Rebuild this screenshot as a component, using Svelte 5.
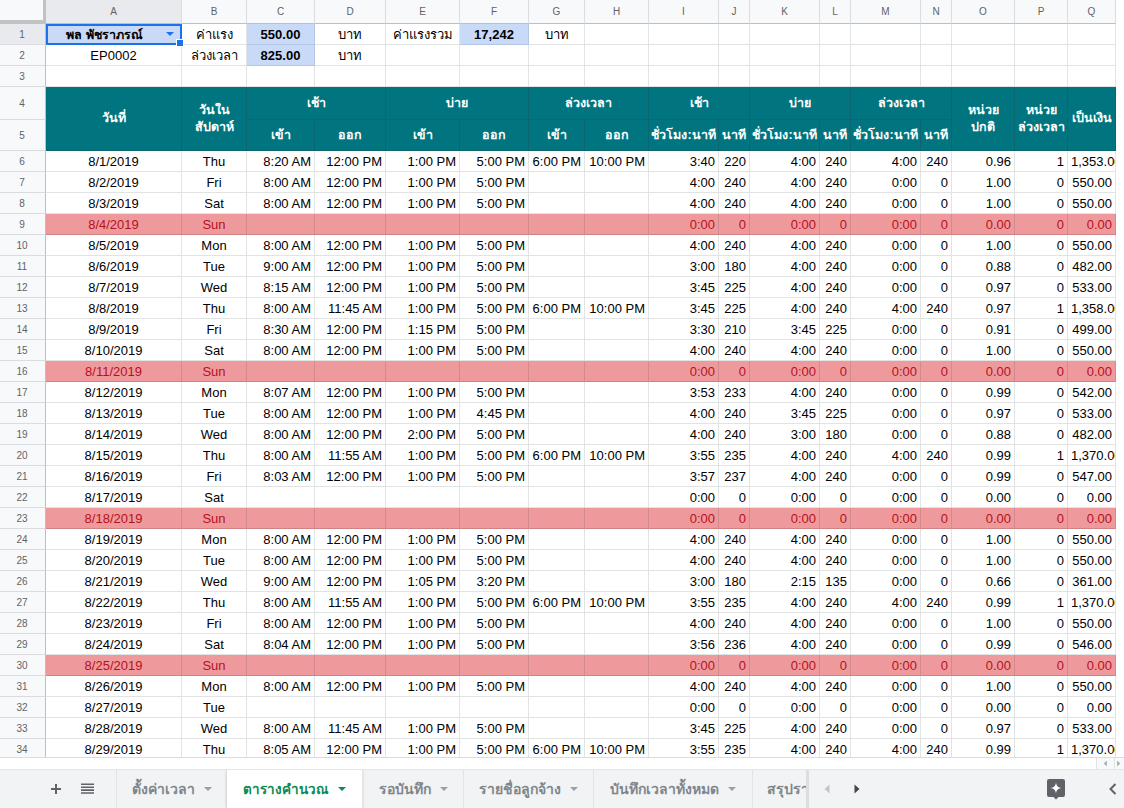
<script>
  const letters = "ABCDEFGHIJKLMNOPQ".split("");

  const std = ["8:00 AM", "12:00 PM", "1:00 PM", "5:00 PM", "", ""];
  const none = ["", "", "", "", "", ""];
  const full = ["4:00", "240", "4:00", "240", "0:00", "0", "1.00", "0", "550.00"];
  const zero = ["0:00", "0", "0:00", "0", "0:00", "0", "0.00", "0", "0.00"];

  function row(date, day, times, nums, off = false) {
    return { date, day, cells: [...times, ...nums], off };
  }

  const rows = [
    row("8/1/2019", "Thu", ["8:20 AM", "12:00 PM", "1:00 PM", "5:00 PM", "6:00 PM", "10:00 PM"], ["3:40", "220", "4:00", "240", "4:00", "240", "0.96", "1", "1,353.00"]),
    row("8/2/2019", "Fri", std, full),
    row("8/3/2019", "Sat", std, full),
    row("8/4/2019", "Sun", none, zero, true),
    row("8/5/2019", "Mon", std, full),
    row("8/6/2019", "Tue", ["9:00 AM", "12:00 PM", "1:00 PM", "5:00 PM", "", ""], ["3:00", "180", "4:00", "240", "0:00", "0", "0.88", "0", "482.00"]),
    row("8/7/2019", "Wed", ["8:15 AM", "12:00 PM", "1:00 PM", "5:00 PM", "", ""], ["3:45", "225", "4:00", "240", "0:00", "0", "0.97", "0", "533.00"]),
    row("8/8/2019", "Thu", ["8:00 AM", "11:45 AM", "1:00 PM", "5:00 PM", "6:00 PM", "10:00 PM"], ["3:45", "225", "4:00", "240", "4:00", "240", "0.97", "1", "1,358.00"]),
    row("8/9/2019", "Fri", ["8:30 AM", "12:00 PM", "1:15 PM", "5:00 PM", "", ""], ["3:30", "210", "3:45", "225", "0:00", "0", "0.91", "0", "499.00"]),
    row("8/10/2019", "Sat", std, full),
    row("8/11/2019", "Sun", none, zero, true),
    row("8/12/2019", "Mon", ["8:07 AM", "12:00 PM", "1:00 PM", "5:00 PM", "", ""], ["3:53", "233", "4:00", "240", "0:00", "0", "0.99", "0", "542.00"]),
    row("8/13/2019", "Tue", ["8:00 AM", "12:00 PM", "1:00 PM", "4:45 PM", "", ""], ["4:00", "240", "3:45", "225", "0:00", "0", "0.97", "0", "533.00"]),
    row("8/14/2019", "Wed", ["8:00 AM", "12:00 PM", "2:00 PM", "5:00 PM", "", ""], ["4:00", "240", "3:00", "180", "0:00", "0", "0.88", "0", "482.00"]),
    row("8/15/2019", "Thu", ["8:00 AM", "11:55 AM", "1:00 PM", "5:00 PM", "6:00 PM", "10:00 PM"], ["3:55", "235", "4:00", "240", "4:00", "240", "0.99", "1", "1,370.00"]),
    row("8/16/2019", "Fri", ["8:03 AM", "12:00 PM", "1:00 PM", "5:00 PM", "", ""], ["3:57", "237", "4:00", "240", "0:00", "0", "0.99", "0", "547.00"]),
    row("8/17/2019", "Sat", none, zero),
    row("8/18/2019", "Sun", none, zero, true),
    row("8/19/2019", "Mon", std, full),
    row("8/20/2019", "Tue", std, full),
    row("8/21/2019", "Wed", ["9:00 AM", "12:00 PM", "1:05 PM", "3:20 PM", "", ""], ["3:00", "180", "2:15", "135", "0:00", "0", "0.66", "0", "361.00"]),
    row("8/22/2019", "Thu", ["8:00 AM", "11:55 AM", "1:00 PM", "5:00 PM", "6:00 PM", "10:00 PM"], ["3:55", "235", "4:00", "240", "4:00", "240", "0.99", "1", "1,370.00"]),
    row("8/23/2019", "Fri", std, full),
    row("8/24/2019", "Sat", ["8:04 AM", "12:00 PM", "1:00 PM", "5:00 PM", "", ""], ["3:56", "236", "4:00", "240", "0:00", "0", "0.99", "0", "546.00"]),
    row("8/25/2019", "Sun", none, zero, true),
    row("8/26/2019", "Mon", std, full),
    row("8/27/2019", "Tue", none, zero),
    row("8/28/2019", "Wed", ["8:00 AM", "11:45 AM", "1:00 PM", "5:00 PM", "", ""], ["3:45", "225", "4:00", "240", "0:00", "0", "0.97", "0", "533.00"]),
    row("8/29/2019", "Thu", ["8:05 AM", "12:00 PM", "1:00 PM", "5:00 PM", "6:00 PM", "10:00 PM"], ["3:55", "235", "4:00", "240", "4:00", "240", "0.99", "1", "1,370.00"])
  ];

  // merged header cells: [first column, column span, sheet row, row span, text]
  const head = [
    [2, 1, 4, 2, "วันที่"],
    [3, 1, 4, 2, "วันใน\nสัปดาห์"],
    [4, 2, 4, 1, "เช้า"],
    [6, 2, 4, 1, "บ่าย"],
    [8, 2, 4, 1, "ล่วงเวลา"],
    [10, 2, 4, 1, "เช้า"],
    [12, 2, 4, 1, "บ่าย"],
    [14, 2, 4, 1, "ล่วงเวลา"],
    [16, 1, 4, 2, "หน่วย\nปกติ"],
    [17, 1, 4, 2, "หน่วย\nล่วงเวลา"],
    [18, 1, 4, 2, "เป็นเงิน"],
    [4, 1, 5, 1, "เข้า"],
    [5, 1, 5, 1, "ออก"],
    [6, 1, 5, 1, "เข้า"],
    [7, 1, 5, 1, "ออก"],
    [8, 1, 5, 1, "เข้า"],
    [9, 1, 5, 1, "ออก"],
    [10, 1, 5, 1, "ชั่วโมง:นาที"],
    [11, 1, 5, 1, "นาที"],
    [12, 1, 5, 1, "ชั่วโมง:นาที"],
    [13, 1, 5, 1, "นาที"],
    [14, 1, 5, 1, "ชั่วโมง:นาที"],
    [15, 1, 5, 1, "นาที"]
  ];

  const tabs = [
    { name: "ตั้งค่าเวลา", width: 111 },
    { name: "ตารางคำนวณ", width: 135, active: true },
    { name: "รอบันทึก", width: 101 },
    { name: "รายชื่อลูกจ้าง", width: 130 },
    { name: "บันทึกเวลาทั้งหมด", width: 159 },
    { name: "สรุปรายงาน", width: 120 }
  ];

  const top = { 1: ["", "ค่าแรง", "550.00", "บาท", "ค่าแรงรวม", "17,242", "บาท"], 2: ["EP0002", "ล่วงเวลา", "825.00", "บาท"], 3: [] };
</script>

<div class="sheet">
  <div class="viewport">
    <div class="grid">
      <div class="corner"></div>
      {#each letters as l, i}
        <div class="colhead" class:picked={i === 0}>{l}</div>
      {/each}

      {#each [1, 2, 3] as n}
        <div class="rowhead" class:picked={n === 1}>{n}</div>
        {#each letters as _, i}
          {#if n === 1 && i === 0}
            <div class="cell center bold selected">
              <span>พล พัชราภรณ์</span>
              <span class="drop"></span>
              <span class="handle"></span>
            </div>
          {:else}
            <div
              class="cell center"
              class:bold={(i === 2 && n < 3) || (i === 5 && n === 1)}
              class:blue={(i === 2 && n < 3) || (i === 5 && n === 1)}
            >{top[n][i] ?? ""}</div>
          {/if}
        {/each}
      {/each}

      {#each [4, 5] as n}
        <div class="rowhead" style={`grid-column:1;grid-row:${n + 1}`}>{n}</div>
      {/each}
      {#each head as [c, cs, r, rs, text]}
        <div class="hcell" style={`grid-column:${c} / span ${cs};grid-row:${r + 1} / span ${rs}`}>{text}</div>
      {/each}

      {#each rows as r, i}
        <div class="rowhead">{i + 6}</div>
        <div class="cell center" class:off={r.off}>{r.date}</div>
        <div class="cell center" class:off={r.off}>{r.day}</div>
        {#each r.cells as v}
          <div class="cell right" class:off={r.off}>{v}</div>
        {/each}
      {/each}
    </div>
  </div>

  <div class="hscroll">
    <div class="sbtn">
      <svg width="5" height="7" viewBox="0 0 5 7"><path d="M4 0.5v6L0.5 3.500z" fill="#b5b5b5" /></svg>
    </div>
    <div class="sbtn">
      <svg width="5" height="7" viewBox="0 0 5 7"><path d="M1 0.5v6L4.500 3.500z" fill="#b5b5b5" /></svg>
    </div>
  </div>

  <div class="tabbar">
    <div class="tools">
      <svg width="12" height="12" viewBox="0 0 12 12"><path d="M5 1h2v4h4v2H7v4H5V7H1V5h4z" fill="#5f6368" /></svg>
      <svg width="13" height="12" viewBox="0 0 13 12"><path d="M0 0.5h13v1.6H0zM0 3.4h13v1.6H0zM0 6.3h13v1.6H0zM0 9.2h13v1.6H0z" fill="#5f6368" /></svg>
    </div>
    <div class="tabs">
      {#each tabs as t}
        <div class="tab" class:active={t.active} style={`flex-basis:${t.width}px`}>
          <span>{t.name}</span>
          <i class="caret"></i>
        </div>
      {/each}
    </div>
    <div class="nav">
      <svg width="6" height="10" viewBox="0 0 6 10"><path d="M5.500 0.5v9L0.5 5z" fill="#c4c7c9" /></svg>
      <svg width="6" height="10" viewBox="0 0 6 10"><path d="M0.5 0.5v9L5.500 5z" fill="#444746" /></svg>
    </div>
    <div class="side">
      <svg width="18" height="21" viewBox="0 0 18 21">
        <path d="M2 0h14a2 2 0 0 1 2 2v14a2 2 0 0 1-2 2h-4.500L9 20.500 6.500 18H2a2 2 0 0 1-2-2V2a2 2 0 0 1 2-2z" fill="#5f6368" />
        <path d="M9 3.500C9.500 7 11 8.500 14.500 9 11 9.500 9.500 11 9 14.500 8.500 11 7 9.500 3.500 9 7 8.500 8.500 7 9 3.500z" fill="#fff" />
      </svg>
      <svg width="8" height="12" viewBox="0 0 8 12"><path d="M6.500 1L1.500 6l5 5" fill="none" stroke="#5f6368" stroke-width="2" /></svg>
    </div>
  </div>
</div>

<style>
  :global(body) {
    margin: 0;
    background: #fff;
  }

  .sheet {
    width: 1124px;
    height: 808px;
    display: flex;
    flex-direction: column;
    overflow: hidden;
    font-family: "Liberation Sans", Arial, sans-serif;
    font-size: 13px;
    color: #000;
  }

  .viewport {
    height: 757px;
    overflow: hidden;
    flex: none;
  }

  .grid {
    display: grid;
    grid-template-columns: 46px 136px 65px 68px 71px 74px 69px 56px 64px 70px 31px 70px 31px 70px 31px 63px 53px 48px;
    grid-template-rows: 24px 21px 21px 21px 33px 31px;
    grid-auto-rows: 21px;
    width: 1116px;
  }

  .corner {
    background: #f8f9fa;
    border-right: 3px solid #c0c2c4;
    border-bottom: 4px solid #c0c2c4;
  }

  .colhead {
    display: flex;
    align-items: center;
    justify-content: center;
    background: #f8f9fa;
    border-right: 1px solid #dadce0;
    border-bottom: 1px solid #bdbfc2;
    font-size: 10px;
    color: #5f6368;
  }

  .rowhead {
    display: flex;
    align-items: center;
    justify-content: center;
    padding-right: 1px;
    background: #f8f9fa;
    border-right: 1px solid #bdbfc2;
    border-bottom: 1px solid #dadce0;
    font-size: 10px;
    color: #5f6368;
  }

  .colhead.picked,
  .rowhead.picked {
    background: #e8eaed;
  }

  .cell {
    box-sizing: border-box;
    padding: 1px 3px 0;
    line-height: 20px;
    white-space: nowrap;
    overflow: hidden;
    background: #fff;
    border-right: 1px solid #e2e3e3;
    border-bottom: 1px solid #e2e3e3;
  }

  .center {
    text-align: center;
  }

  .right {
    text-align: right;
  }

  .bold {
    font-weight: bold;
  }

  .blue {
    background: #c9daf8;
    border-color: #b3c6e4;
  }

  .off {
    background: #ee9a9c;
    color: #b7101d;
    border-right-color: #d48a8a;
    border-bottom-color: #d08282;
  }

  .selected {
    position: relative;
    overflow: visible;
    padding: 0 22px 0 3px;
    line-height: 18px;
    font-size: 12.5px;
    background: #c9daf8;
    border: 2px solid #1a73e8;
  }

  .drop {
    position: absolute;
    top: 6px;
    right: 6px;
    border-left: 4px solid transparent;
    border-right: 4px solid transparent;
    border-top: 4px solid #1a73e8;
  }

  .handle {
    position: absolute;
    right: -4px;
    bottom: -4px;
    width: 6px;
    height: 6px;
    background: #1a73e8;
    border: 1px solid #fff;
    z-index: 2;
  }

  .hcell {
    box-sizing: border-box;
    display: flex;
    align-items: center;
    justify-content: center;
    text-align: center;
    white-space: pre-line;
    line-height: 17px;
    overflow: hidden;
    background: #007580;
    color: #fff;
    font-size: 12.5px;
    font-weight: bold;
    border-right: 1px solid #0d666f;
    border-bottom: 1px solid #0d666f;
  }

  .hscroll {
    height: 12px;
    flex: none;
    display: flex;
    justify-content: flex-end;
    box-sizing: border-box;
    border-top: 1px solid #dadce0;
  }

  .sbtn {
    width: 17px;
    display: flex;
    align-items: center;
    justify-content: center;
    background: #f8f9fa;
    border-left: 1px solid #e2e3e3;
  }

  .sbtn + .sbtn {
    width: 8px;
    justify-content: flex-start;
    padding-left: 1px;
  }

  .tabbar {
    flex: 1;
    display: flex;
    background: #f1f3f4;
    border-top: 1px solid #e4e5e6;
  }

  .tools {
    width: 116px;
    flex: none;
    box-sizing: border-box;
    display: flex;
    align-items: center;
    gap: 19px;
    padding-left: 50px;
  }

  .tabs {
    width: 690px;
    flex: none;
    display: flex;
    overflow: hidden;
    box-sizing: content-box;
    border-right: 3px solid #dcdedf;
  }

  .tab {
    flex-grow: 0;
    flex-shrink: 0;
    box-sizing: border-box;
    display: flex;
    align-items: center;
    justify-content: center;
    gap: 9px;
    border-left: 1px solid #e2e4e5;
    color: #80868b;
    font-weight: bold;
    font-size: 14px;
    white-space: nowrap;
  }

  .tab.active {
    background: #fff;
    color: #0d8a50;
    font-size: 13.5px;
    border-left: none;
    box-shadow: 0 0 3px rgba(60, 64, 67, 0.35);
  }

  .caret {
    border-left: 4px solid transparent;
    border-right: 4px solid transparent;
    border-top: 4px solid #9aa0a6;
  }

  .tab.active .caret {
    border-top-color: #0d8a50;
  }

  .nav {
    width: 60px;
    flex: none;
    display: flex;
    align-items: center;
    gap: 24px;
    padding-left: 15px;
    box-sizing: border-box;
  }

  .side {
    flex: 1;
    display: flex;
    align-items: center;
    justify-content: flex-end;
    gap: 44px;
    padding-right: 7px;
  }
</style>
